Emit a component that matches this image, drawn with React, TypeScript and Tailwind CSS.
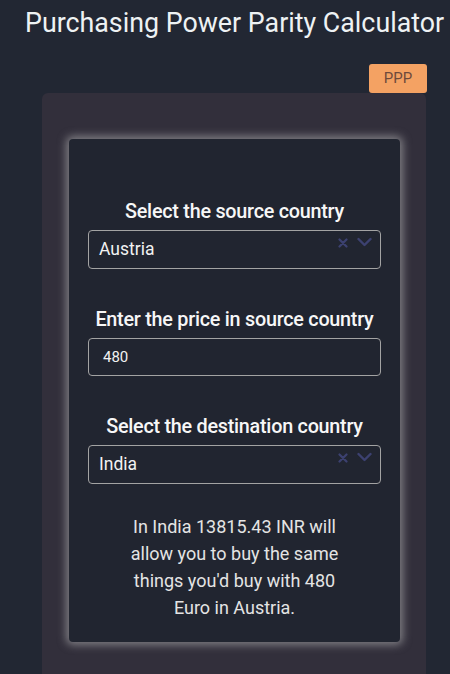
import React from "react";

const font = { fontFamily: "Roboto, 'Liberation Sans', sans-serif" };

const Icons: React.FC = () => (
  <div className="flex items-start gap-[9px] pt-[6px] pr-[8px] text-[#3c4170]">
    <svg width="10" height="10" viewBox="0 0 10 10" className="mt-[1px]">
      <path d="M1.5 1.5 L8.5 8.5 M8.5 1.5 L1.5 8.5" stroke="currentColor" strokeWidth="2.2" strokeLinecap="round" />
    </svg>
    <svg width="15" height="10" viewBox="0 0 15 10">
      <path d="M1.5 2 L7.5 8 L13.5 2" stroke="currentColor" strokeWidth="2.4" fill="none" strokeLinecap="round" strokeLinejoin="round" />
    </svg>
  </div>
);

const CountrySelect: React.FC<{ value: string }> = ({ value }) => (
  <div className="flex h-[39px] w-full justify-between rounded border border-[#a3a3a3]">
    <span className="self-center pl-[10px] text-[17.5px] text-[#f2f2f2]">{value}</span>
    <Icons />
  </div>
);

const Label: React.FC<{ children: React.ReactNode }> = ({ children }) => (
  <h2 className="pt-[1px] text-center text-[19.8px] font-medium leading-[24px] tracking-[-0.25px] text-[#f7f7f7]">
    {children}
  </h2>
);

export default function App() {
  return (
    <div className="min-h-screen overflow-hidden bg-[#222733]" style={font}>
      <h1 className="pl-[25px] pt-[7px] text-[26.8px] leading-[32px] text-[#eef2f4]">
        Purchasing Power Parity Calculator
      </h1>
      <div className="mt-[25px] flex justify-end pr-[23px]">
        <button className="h-[29px] w-[58px] rounded-[3px] bg-[#f4a263] text-[15px] text-[#6e4a3c]">PPP</button>
      </div>
      <div className="ml-[42px] w-[384px] rounded-t-md bg-[#322f3b] pb-[40px] pl-[27px] pt-[46px]">
        <div className="h-[503px] w-[331px] rounded bg-[#212530] px-[19px] pt-[60px] shadow-[0_0_9px_3px_rgba(190,190,190,0.55)]">
          <Label>Select the source country</Label>
          <div className="mt-[6px]">
            <CountrySelect value="Austria" />
          </div>
          <div className="mt-[38px]">
            <Label>Enter the price in source country</Label>
          </div>
          <div className="mt-[6px] flex h-[38px] items-center rounded border border-[#a3a3a3] pl-[14px] text-[15px] text-[#f2f2f2]">
            480
          </div>
          <div className="mt-[38px]">
            <Label>Select the destination country</Label>
          </div>
          <div className="mt-[6px]">
            <CountrySelect value="India" />
          </div>
          <p className="mx-auto mt-[29px] w-[215px] text-center text-[18px] leading-[27px] text-[#e4e4e4]">
            In India 13815.43 INR will allow you to buy the same things you'd buy with 480 Euro in Austria.
          </p>
        </div>
      </div>
    </div>
  );
}
